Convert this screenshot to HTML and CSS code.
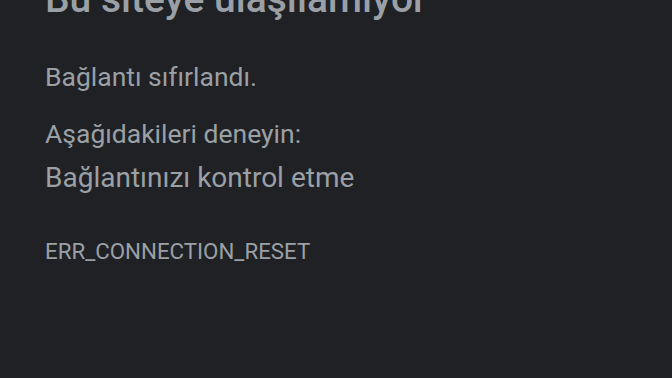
FILE: index.html
```html
<!DOCTYPE html>
<html lang="tr">
<head>
<meta charset="utf-8">
<link rel="stylesheet" href="styles.css">
</head>
<body>
<main class="page">
  <h1 class="title">Bu siteye ulaşılamıyor</h1>
  <p class="summary">Bağlantı sıfırlandı.</p>
  <p class="try">Aşağıdakileri deneyin:</p>
  <p class="suggestion">Bağlantınızı kontrol etme</p>
  <p class="code">ERR_CONNECTION_RESET</p>
</main>
</body>
</html>
```
FILE: styles.css
```css
html, body {
  margin: 0;
  height: 100%;
  background: #202124;
}
.page {
  padding-left: 45px;
  font-family: Roboto, "Noto Sans", sans-serif;
  color: #9aa0a6;
}
.title {
  margin: -24px 0 0;
  font-size: 39px;
  font-weight: 500;
  line-height: 46px;
  color: #9aa0a6;
}
.summary {
  margin: 39px 0 0;
  font-size: 26.5px;
  line-height: 32px;
}
.try {
  margin: 25px 0 0;
  font-size: 26.5px;
  line-height: 32px;
}
.suggestion {
  margin: 11px 0 0;
  font-size: 28px;
  line-height: 34px;
}
.code {
  margin: 42px 0 0;
  font-size: 22.3px;
  line-height: 28px;
}
```
